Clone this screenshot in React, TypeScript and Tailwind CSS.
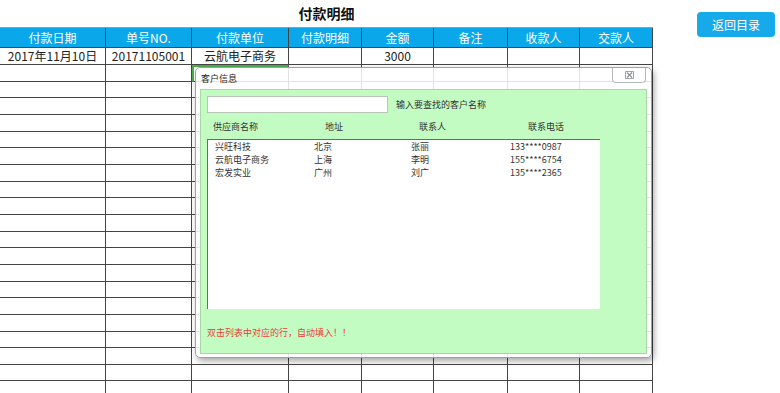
const cols = ["付款日期", "单号NO.", "付款单位", "付款明细", "金额", "备注", "收款人", "交款人"];
const firstRow = ["2017年11月10日", "20171105001", "云航电子商务", "", "3000", "", "", ""];

const customers = [
  ["兴旺科技", "北京", "张丽", "133****0987"],
  ["云航电子商务", "上海", "李明", "155****6754"],
  ["宏发实业", "广州", "刘广", "135****2365"],
];

const gridCols = "grid grid-cols-[106px_86px_97px_73px_72px_74px_72px_73px]";

const CustomerDialog = () => {
  return (
    <div className="absolute left-[195px] top-[67px] w-[457px] h-[291px] rounded-[5px] border border-[#9aa3a8] bg-white/85 shadow-[2px_3px_6px_rgba(0,0,0,0.35)]">
      {/* title bar */}
      <div className="relative h-[21px] pl-[5px] pt-[5px] text-[9px] leading-[12px] text-[#222]">
        客户信息
        <button className="absolute right-[5px] top-0 w-[34px] h-[15px] rounded-b-[4px] border border-t-0 border-[#b5b9bc] bg-white flex items-center justify-center">
          <svg width="9" height="8" viewBox="0 0 9 8" fill="none" stroke="#8a8f94" strokeWidth="1.2">
            <rect x="0.6" y="0.6" width="7.8" height="6.8" strokeWidth="0.8" />
            <path d="M2 1.5 L7 6.5 M7 1.5 L2 6.5" />
          </svg>
        </button>
      </div>

      {/* green content */}
      <div className="mx-[4px] h-[265px] bg-[#c3fcc3] border border-[#a8d8a8] px-[6px] pt-[6px] text-[9px] leading-[12px] text-[#333]">
        <div className="flex items-center gap-[8px]">
          <div className="w-[181px] h-[17px] bg-white border border-[#b8c4b8]" />
          <span>输入要查找的客户名称</span>
        </div>

        <div className="flex mt-[8px] h-[12px]">
          <span className="w-[118px] pl-[6px]">供应商名称</span>
          <span className="w-[94px]">地址</span>
          <span className="w-[109px]">联系人</span>
          <span>联系电话</span>
        </div>

        <div className="mt-[6px] w-[393px] h-[170px] bg-white border-t border-l border-[#6b6b6b]">
          {customers.map((c) => (
            <div key={c[0]} className="flex h-[13px] items-center">
              <span className="w-[106px] pl-[7px]">{c[0]}</span>
              <span className="w-[97px]">{c[1]}</span>
              <span className="w-[99px]">{c[2]}</span>
              <span>{c[3]}</span>
            </div>
          ))}
        </div>

        <div className="mt-[18px] text-[#ee3b3b]">双击列表中对应的行，自动填入！！</div>
      </div>
    </div>
  );
};

export default function App() {
  const blankRows = Array.from({ length: 20 });

  return (
    <div
      className="relative w-[780px] h-[393px] overflow-hidden bg-white"
      style={{ fontFamily: '"Noto Sans CJK SC", "Noto Sans", sans-serif' }}
    >
      <div className="flex">
        <div className="w-[653px]">
          <div className="h-[27px] flex items-center justify-center text-[14px] font-bold text-[#111]">
            付款明细
          </div>

          {/* header */}
          <div className={`${gridCols} h-[21px] bg-[#0aa7ea] border-t border-[#9a9a9a]`}>
            {cols.map((c) => (
              <div
                key={c}
                className="flex items-center justify-center border-r border-b border-[#444] text-[12px] text-white"
              >
                {c}
              </div>
            ))}
          </div>

          {/* first row */}
          <div className={`${gridCols} h-[17px]`}>
            {firstRow.map((c, i) => (
              <div
                key={i}
                className="flex items-center justify-center border-r border-b border-[#444] text-[12px] leading-none text-[#222]"
              >
                {c}
              </div>
            ))}
          </div>

          {blankRows.map((_, r) => (
            <div key={r} className={`${gridCols} h-[16.67px]`}>
              {cols.map((c, i) => (
                <div
                  key={c}
                  className={`border-r border-b border-[#444] ${
                    r === 0 && i === 2 ? "border-t-2 border-l-2 border-t-[#4cae4c] border-l-[#4cae4c]" : ""
                  }`}
                />
              ))}
            </div>
          ))}
        </div>

        <div className="flex-1 flex justify-end pr-[5px] pt-[12px]">
          <button className="w-[78px] h-[25px] rounded-[4px] bg-[#16aaea] text-[12px] text-white">
            返回目录
          </button>
        </div>
      </div>

      <CustomerDialog />
    </div>
  );
}
